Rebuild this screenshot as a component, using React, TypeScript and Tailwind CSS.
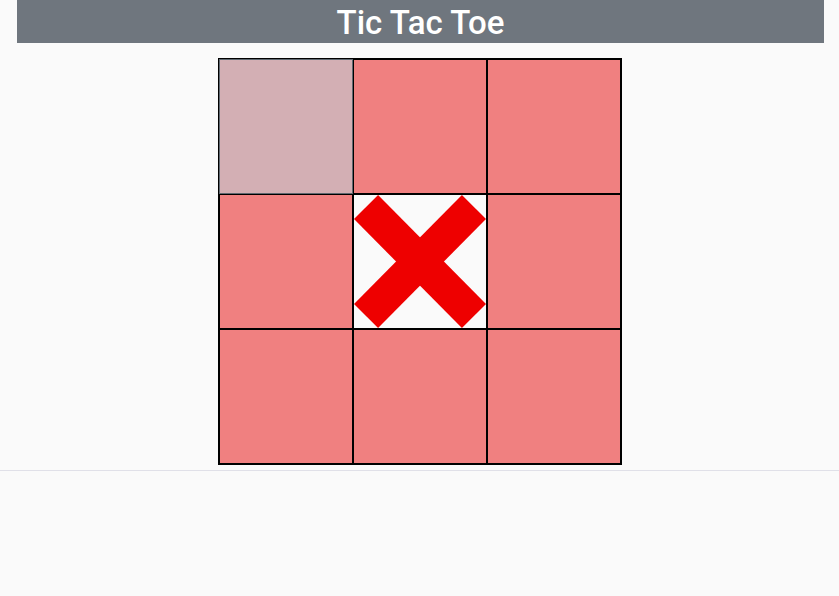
import * as React from 'react'

// Tic Tac Toe board: one hovered cell, one X in the middle.

type Cell = '' | 'X' | 'O'

const board: Cell[] = ['', '', '', '', 'X', '', '', '', '']

function Cross() {
  // arms stop short of the corners, so the corner tips stay white
  return (
    <svg viewBox="0 0 132 133" className="block w-full h-full">
      <line x1="12" y1="12" x2="120" y2="121" stroke="#ee0000" strokeWidth="34" />
      <line x1="120" y1="12" x2="12" y2="121" stroke="#ee0000" strokeWidth="34" />
    </svg>
  )
}

export default function App() {
  const hovered = 0

  return (
    <div className="min-h-[596px] bg-[#fafafa] font-['Liberation_Sans',Arial,sans-serif]">
      <header className="ml-[17px] mr-[15px] h-[43px] bg-[#6f767e] flex items-center justify-center">
        <h1 className="text-[33px] leading-none font-medium text-white pt-[1px] font-['Roboto',sans-serif]">
          Tic Tac Toe
        </h1>
      </header>

      <div className="flex justify-center mt-[15px]">
        <div className="grid grid-cols-[repeat(3,134px)] border border-black">
          {board.map((cell, i) => {
            const filled = cell !== ''
            const isHover = i === hovered && !filled
            return (
              <div
                key={i}
                className={
                  filled
                    ? 'h-[135px] border border-black bg-[#fafafa] overflow-hidden'
                    : isHover
                      ? 'h-[135px] border border-[#5f6870] bg-[#d3afb4]'
                      : 'h-[135px] border border-black bg-[#f08080]'
                }
              >
                {cell === 'X' && <Cross />}
              </div>
            )
          })}
        </div>
      </div>

      <div className="mt-[5px] border-t border-[#e0e0e8]" />
    </div>
  )
}
